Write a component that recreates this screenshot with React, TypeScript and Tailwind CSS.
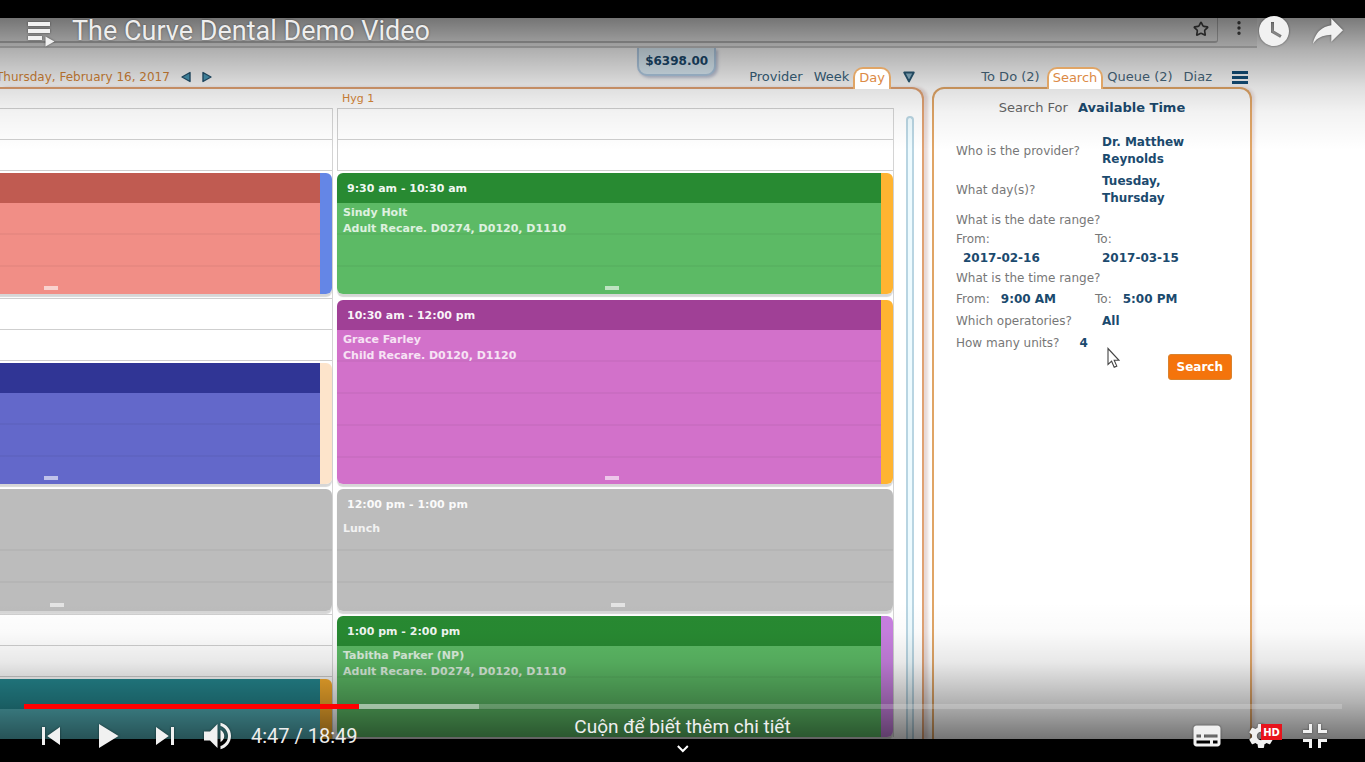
import React from "react";
import { Star, EllipsisVertical } from "lucide-react";

type Item =
  | { kind: "blank" }
  | {
      kind: "card";
      box: string;
      head: string;
      body: string;
      stripe?: string;
      time?: string;
      lines?: string[];
      fixed?: boolean;
    };

const firstOperatory: Item[] = [
  { kind: "blank" },
  { kind: "card", box: "h-[121px] mb-1", head: "bg-[#c05b51]", body: "bg-[#f18e86]", stripe: "bg-[#6486e6]" },
  { kind: "blank" },
  { kind: "card", box: "h-[121px] mb-[5px]", head: "bg-[#303595]", body: "bg-[#6368ca]", stripe: "bg-[#fde4cb]" },
  { kind: "card", box: "h-[122px] mb-[3px]", head: "bg-[#bcbcbc]", body: "bg-[#bcbcbc]" },
  { kind: "blank" },
  { kind: "card", box: "h-[121px]", head: "bg-[#268b93]", body: "bg-[#55b5bd]", stripe: "bg-[#fdb02e]" },
];

const secondOperatory: Item[] = [
  { kind: "blank" },
  {
    kind: "card", box: "h-[121px] mb-[6px]", head: "bg-[#288a32]", body: "bg-[#5cba65]", stripe: "bg-[#ffb431]",
    time: "9:30 am - 10:30 am", lines: ["Sindy Holt", "Adult Recare. D0274, D0120, D1110"],
  },
  {
    kind: "card", box: "h-[184px] mb-[5px]", head: "bg-[#a04096]", body: "bg-[#d271ca]", stripe: "bg-[#ffb431]",
    time: "10:30 am - 12:00 pm", lines: ["Grace Farley", "Child Recare. D0120, D1120"],
  },
  {
    kind: "card", box: "h-[122px] mb-[5px]", head: "bg-[#bcbcbc]", body: "bg-[#bcbcbc]",
    time: "12:00 pm - 1:00 pm", lines: ["Lunch"],
  },
  {
    kind: "card", box: "h-[121px]", head: "bg-[#288a32]", body: "bg-[#5cba65]", stripe: "bg-[#c880e0]",
    time: "1:00 pm - 2:00 pm", lines: ["Tabitha Parker (NP)", "Adult Recare. D0274, D0120, D1110"], fixed: true,
  },
];

function Operatory({ items }: { items: Item[] }) {
  return (
    <div className="flex w-[557px] flex-none flex-col border-r border-[#d4d4d4] bg-white">
      {items.map((item, i) =>
        item.kind === "blank" ? (
          <div key={i} className="h-[65px] flex-none">
            <div className="h-[31px] border-t border-l border-[#cfcfcf]" />
            <div className="h-8 border-y border-l border-[#cfcfcf]" />
          </div>
        ) : (
          <article
            key={i}
            className={`flex flex-none overflow-hidden rounded-md shadow-[0_3px_1px_rgba(0,0,0,0.16)] ${item.box}`}
          >
            <div className="flex min-w-0 flex-1 flex-col text-[11px] font-bold">
              <h3 className={`h-[30px] flex-none pl-[10px] leading-[31px] text-white/95 ${item.head}`}>{item.time}</h3>
              <div className={`flex flex-1 flex-col ${item.body}`}>
                <div className="flex flex-1 flex-col bg-[repeating-linear-gradient(to_bottom,transparent_0_30px,rgba(0,0,0,0.04)_30px_32px)] pt-[2px] pl-[6px] leading-4 text-white/80">
                  {item.lines?.map((line) => <p key={line}>{line}</p>)}
                  {!item.fixed && <span className="mt-auto mb-1 h-1 w-[14px] self-center bg-white/60" />}
                </div>
              </div>
            </div>
            {item.stripe && <div className={`w-3 flex-none ${item.stripe}`} />}
          </article>
        )
      )}
    </div>
  );
}

function Value({ id, children }: { id: string; children: React.ReactNode }) {
  return (
    <button id={id} className="text-left font-bold text-[#1b4a6e]">
      {children}
    </button>
  );
}

function Tab({ children }: { children: React.ReactNode }) {
  return (
    <button className="relative z-10 -mb-[2px] flex h-[22px] items-center rounded-t-[10px] border-2 border-b-0 border-[#e0a566] bg-white px-1 pb-[3px] text-[#dc8a45]">
      {children}
    </button>
  );
}

function Schedule() {
  return (
    <section className="flex min-w-0 flex-1 flex-col">
      <header className="flex h-[39px] flex-none items-end justify-between text-[13px] leading-5 text-[#3a6580]">
        <div className="-ml-1 flex items-center gap-[11px]">
          <span className="text-xs leading-5 whitespace-nowrap text-[#d98838]">Thursday, February 16, 2017</span>
          <button aria-label="Previous day">
            <svg viewBox="0 0 10 12" className="h-3 w-[10px]"><path d="M9 1.5v9L1 6z" fill="#4a9ab8" stroke="#24526e" strokeWidth="1.4" strokeLinejoin="round" /></svg>
          </button>
          <button aria-label="Next day">
            <svg viewBox="0 0 10 12" className="h-3 w-[10px]"><path d="M1 1.5v9L9 6z" fill="#4a9ab8" stroke="#24526e" strokeWidth="1.4" strokeLinejoin="round" /></svg>
          </button>
        </div>
        <div className="flex h-full items-end">
          <div className="mr-[33px] flex h-7 items-center self-start rounded-b-[10px] border-2 border-t-0 border-[#b4cfe8] bg-[#e2f3fd] px-[6px] text-xs font-bold text-[#1b4a6e] shadow-[2px_2px_3px_rgba(60,80,140,0.3)]">
            $6398.00
          </div>
          <nav className="flex items-end pr-[9px]">
            <button className="mr-[11px]">Provider</button>
            <button className="mr-1">Week</button>
            <Tab>Day</Tab>
            <button aria-label="More views" className="ml-3 flex h-5 items-center">
              <svg viewBox="0 0 12 12" className="h-3 w-3"><path d="M1.2 1.5h9.6L6 10.5z" fill="#8fb8cc" stroke="#2a5a76" strokeWidth="1.8" strokeLinejoin="round" /></svg>
            </button>
          </nav>
        </div>
      </header>
      <div className="flex min-h-0 flex-1 rounded-tr-xl border-t-2 border-r-2 border-[#e0a172] bg-white shadow-[4px_0_3px_rgba(140,70,60,0.2)]">
        <div className="flex min-w-0 flex-1 justify-end gap-1 overflow-hidden">
          <div className="flex-none pt-[19px]">
            <Operatory items={firstOperatory} />
          </div>
          <div className="flex-none">
            <h2 className="h-[19px] pl-[5px] text-[11px] leading-[19px] text-[#d98838]">Hyg 1</h2>
            <Operatory items={secondOperatory} />
          </div>
        </div>
        <div className="mt-[27px] mr-2 ml-3 w-2 flex-none rounded-t-full border-2 border-b-0 border-[#b9d5e2] bg-[#eefbff]" />
      </div>
    </section>
  );
}

function SearchPanel() {
  return (
    <aside className="flex w-[320px] flex-none flex-col">
      <nav className="flex h-[39px] flex-none items-end justify-end pr-1 text-[13px] leading-5 text-[#4a6a80]">
        <button className="mr-[7px]">To Do (2)</button>
        <Tab>Search</Tab>
        <button className="mr-[11px] ml-1">Queue (2)</button>
        <button className="mr-5">Diaz</button>
        <button aria-label="Menu" className="flex h-5 items-center text-[#14507a]">
          <svg viewBox="0 0 16 14" className="h-[14px] w-4" fill="currentColor"><path d="M0 1h16v3H0zM0 6h16v3H0zM0 11h16v3H0z" /></svg>
        </button>
      </nav>
      <form
        onSubmit={(e) => e.preventDefault()}
        className="relative flex flex-1 flex-col rounded-t-xl border-2 border-b-0 border-[#e0a566] bg-white pr-[18px] pl-[22px] text-xs text-[#777] shadow-[3px_0_3px_rgba(140,70,60,0.15)]"
      >
        <div className="mt-[9px] mb-4 flex h-5 items-center gap-[10px] self-center pr-1 text-[13px] text-[#666]">
          <label htmlFor="kind">Search For</label>
          <Value id="kind">Available Time</Value>
        </div>
        <div className="mb-[5px] grid grid-cols-[146px_1fr] items-center leading-[17px]">
          <label htmlFor="provider">Who is the provider?</label>
          <Value id="provider">Dr. Matthew<br />Reynolds</Value>
        </div>
        <div className="mb-[3px] grid grid-cols-[146px_1fr] items-center leading-[17px]">
          <label htmlFor="days">What day(s)?</label>
          <Value id="days">Tuesday,<br />Thursday</Value>
        </div>
        <p className="h-5 leading-5">What is the date range?</p>
        <div className="grid grid-cols-[139px_1fr] leading-[19px]">
          <label htmlFor="date-from">From:</label>
          <label htmlFor="date-to">To:</label>
          <div className="pl-[7px]"><Value id="date-from">2017-02-16</Value></div>
          <div className="pl-[7px]"><Value id="date-to">2017-03-15</Value></div>
        </div>
        <p className="h-5 leading-5">What is the time range?</p>
        <div className="grid grid-cols-[139px_1fr] leading-[22px]">
          <div className="flex gap-[11px]"><label htmlFor="time-from">From:</label><Value id="time-from">9:00 AM</Value></div>
          <div className="flex gap-[11px]"><label htmlFor="time-to">To:</label><Value id="time-to">5:00 PM</Value></div>
        </div>
        <div className="grid grid-cols-[146px_1fr] leading-[22px]">
          <label htmlFor="operatories">Which operatories?</label>
          <Value id="operatories">All</Value>
        </div>
        <div className="flex gap-5 leading-[22px]">
          <label htmlFor="units">How many units?</label>
          <Value id="units">4</Value>
        </div>
        <button type="submit" className="h-[26px] self-end rounded-[3px] border border-[#d9832f] bg-[#f4740c] px-2 text-xs font-bold text-white">
          Search
        </button>
        <svg viewBox="0 0 13 22" className="absolute top-[258px] left-[173px] h-[22px] w-[13px]">
          <path d="M1 1.5v16l3.6-3.3 2.6 6 2.6-1.1-2.6-5.8H12z" fill="#fff" stroke="#444" strokeWidth="1.1" />
        </svg>
      </form>
    </aside>
  );
}

const white = "fill-[#f1f1f1] drop-shadow-[0_0_1px_rgba(0,0,0,0.5)]";

function PlayerButton({ label, d }: { label: string; d: string }) {
  return (
    <button aria-label={label} className="h-[54px] w-[54px] flex-none">
      <svg viewBox="0 0 36 36" className={`h-full w-full ${white}`}><path fillRule="evenodd" d={d} /></svg>
    </button>
  );
}

const icons = {
  prev: "m12,12h2v12h-2z m3.5,6 8.5,6V12z",
  play: "M12,26 25,18 12,10z",
  next: "M12,24 20.5,18 12,12V24z M22,12v12h2V12h-2z",
  volume:
    "M8,21 L12,21 L17,26 L17,10 L12,15 L8,15Z M19,14 L19,22 C20.48,21.32 21.5,19.77 21.5,18 C21.5,16.26 20.48,14.74 19,14Z M19,11.29 C21.89,12.15 24,14.83 24,18 C24,21.17 21.89,23.85 19,24.71 L19,26.77 C23.01,25.86 26,22.28 26,18 C26,13.72 23.01,10.14 19,9.23Z",
  subtitles:
    "M11,11 C9.89,11 9,11.9 9,13 L9,23 C9,24.1 9.89,25 11,25 L25,25 C26.1,25 27,24.1 27,23 L27,13 C27,11.9 26.1,11 25,11Z M11,17H14V19H11Z M20,23H11V21H20Z M25,23H22V21H25Z M25,19H16V17H25Z",
  settings:
    "m23.94,18.78c.03,-.25 .05,-.51 .05,-.78 0,-.27 -.02,-.52 -.05,-.78l1.68,-1.32c.15,-.12 .19,-.33 .09,-.51l-1.6,-2.76c-.09,-.17 -.31,-.24 -.48,-.17l-1.99,.8c-.41,-.32 -.86,-.58 -1.35,-.78l-.30,-2.12c-.02,-.19 -.19,-.33 -.39,-.33l-3.2,0c-.2,0 -.36,.14 -.39,.33l-.30,2.12c-.48,.2 -.93,.47 -1.35,.78l-1.99,-.8c-.18,-.07 -.39,0 -.48,.17l-1.6,2.76c-.10,.17 -.05,.39 .09,.51l1.68,1.32c-.03,.25 -.05,.52 -.05,.78 0,.26 .02,.52 .05,.78l-1.68,1.32c-.15,.12 -.19,.33 -.09,.51l1.6,2.76c.09,.17 .31,.24 .48,.17l1.99,-.8c.41,.32 .86,.58 1.35,.78l.30,2.12c.02,.19 .19,.33 .39,.33l3.2,0c.2,0 .36,-.14 .39,-.33l.30,-2.12c.48,-.2 .93,-.47 1.35,-.78l1.99,.8c.18,.07 .39,0 .48,-.17l1.6,-2.76c.09,-.17 .05,-.39 -.09,-.51l-1.68,-1.32z m-5.94,2.01c-1.54,0 -2.8,-1.25 -2.8,-2.8 0,-1.54 1.25,-2.8 2.8,-2.8 1.54,0 2.8,1.25 2.8,2.8 0,1.54 -1.25,2.8 -2.8,2.8z",
  exit:
    "M14,14H10V16H16V10H14Z M22,14V10H20V16H26V14Z M20,26H22V22H26V20H20Z M10,22H14V26H16V20H10Z",
  later:
    "M18,8 C12.47,8 8,12.47 8,18 C8,23.52 12.47,28 18,28 C23.52,28 28,23.52 28,18 C28,12.47 23.52,8 18,8Z M16,19.02V12H18V17.86L23.10,20.81 22.10,22.54Z",
  share:
    "m20.20,14.19 0,-4.45 7.79,7.79 -7.79,7.56 0,-4.56C16.27,20.69 12.10,21.81 9.34,24.76 8.80,25.13 7.60,27.29 8.12,25.65 9.08,21.32 11.80,17.18 15.98,15.38c1.33,-.60 2.76,-.98 4.21,-1.19z",
};

export default function App() {
  return (
    <div className="relative flex h-screen flex-col overflow-hidden bg-black pt-[18px] pb-[23px] font-['DejaVu_Sans',Verdana,sans-serif]">
      <main className="flex min-h-0 flex-1 flex-col overflow-hidden bg-white">
        <div className="mr-[108px] flex h-[30px] flex-none items-start justify-end border-b-2 border-[#cfcfcf] bg-[#f3f3f3] pr-[9px] text-[#444]">
          <div className="flex h-[25px] flex-1 items-center justify-end rounded-br-[3px] border-r border-b-2 border-[#bdbdbd] pr-2 pb-[2px]">
            <Star className="h-4 w-4" strokeWidth={2.5} />
          </div>
          <EllipsisVertical className="ml-3 h-5 w-[18px]" strokeWidth={2.5} />
        </div>
        <div className="mr-[113px] flex min-h-0 flex-1 gap-2">
          <Schedule />
          <SearchPanel />
        </div>
      </main>

      <div className="pointer-events-none absolute inset-x-0 top-0 h-[160px] bg-[linear-gradient(to_bottom,rgba(0,0,0,0.52)_18px,rgba(0,0,0,0.31)_50px,rgba(0,0,0,0.13)_87px,rgba(0,0,0,0.05)_112px,transparent_150px)]" />
      <div className="pointer-events-none absolute inset-x-0 bottom-0 h-[160px] bg-[linear-gradient(to_top,rgba(0,0,0,0.54)_23px,rgba(0,0,0,0.3)_60px,rgba(0,0,0,0.09)_100px,rgba(0,0,0,0.02)_130px,transparent_160px)]" />

      <div className="absolute inset-0 flex flex-col justify-between font-['Roboto',sans-serif] text-[#eee]">
        <div className="flex items-start pt-1 pr-[10px] pl-7">
          <svg viewBox="0 0 27 25" className={`mt-[18px] mr-[17px] h-[25px] w-[27px] flex-none ${white}`}>
            <path d="M0 0h22v4H0zM0 7h22v4H0zM0 14h14v4H0zM17.500 14.500v10l9-5z" />
          </svg>
          <h1 className="h-[54px] flex-1 truncate text-[27px] leading-[54px] [text-shadow:0_0_2px_rgba(0,0,0,0.5)]">The Curve Dental Demo Video</h1>
          <PlayerButton label="Watch later" d={icons.later} />
          <PlayerButton label="Share" d={icons.share} />
        </div>
        <div className="relative pr-[23px] pl-6">
          <div className="flex h-[5px] bg-white/20">
            <div className="w-[25.4%] bg-[#f00]" />
            <div className="w-[9.1%] bg-white/40" />
          </div>
          <div className="-mb-px flex h-[54px] items-center">
            <PlayerButton label="Previous" d={icons.prev} />
            <div className="mx-[3px] flex">
              <PlayerButton label="Play" d={icons.play} />
            </div>
            <PlayerButton label="Next" d={icons.next} />
            <PlayerButton label="Mute" d={icons.volume} />
            <span className="ml-[5px] text-[20px]">4:47 / 18:49</span>
            <div className="ml-auto flex">
              <PlayerButton label="Subtitles" d={icons.subtitles} />
              <div className="relative flex">
                <PlayerButton label="Settings" d={icons.settings} />
                <span className="absolute top-[15px] left-[27px] flex h-4 w-[21px] items-center justify-center bg-[#e8131c] font-['DejaVu_Sans',sans-serif] text-[10px] font-bold text-white">HD</span>
              </div>
              <PlayerButton label="Exit full screen" d={icons.exit} />
            </div>
          </div>
          <button className="absolute top-[11px] left-1/2 flex -translate-x-1/2 flex-col items-center text-[19px] leading-6 whitespace-nowrap">
            Cuộn để biết thêm chi tiết
            <svg viewBox="0 0 12 8" className="mt-[6px] h-2 w-3"><path d="M1 1l5 5 5-5" fill="none" stroke="#fff" strokeWidth="2" /></svg>
          </button>
        </div>
      </div>
    </div>
  );
}
